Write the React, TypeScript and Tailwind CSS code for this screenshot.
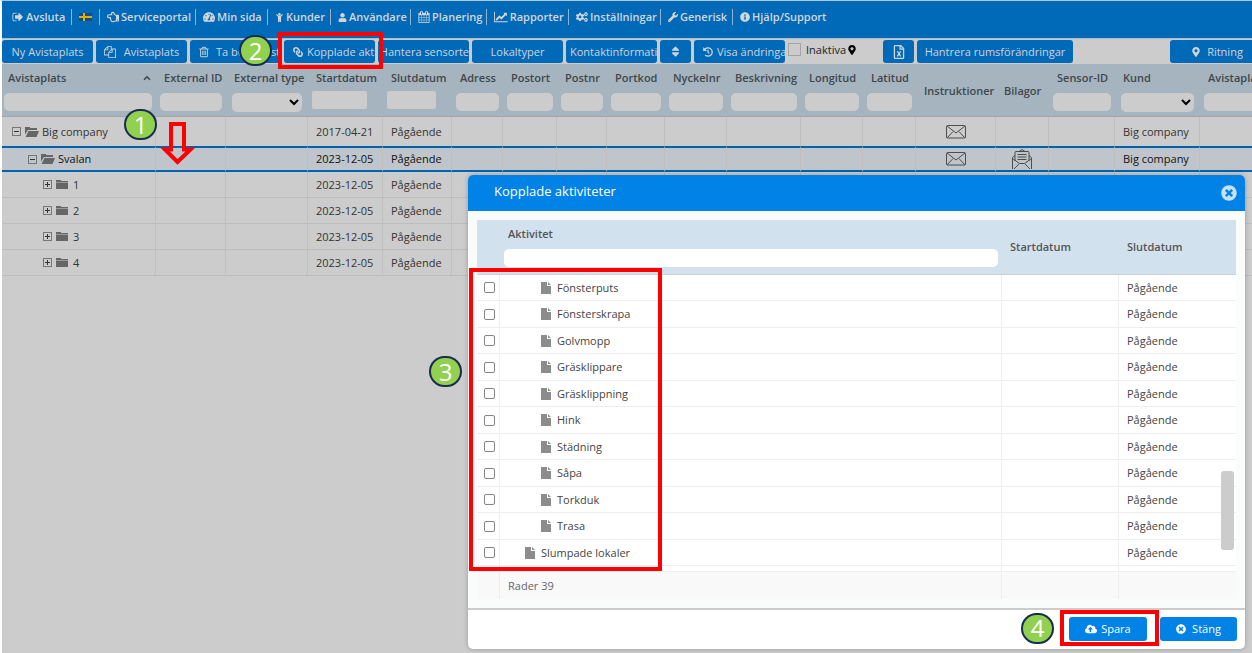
import type { ReactNode } from 'react';
import {
  FaChild,
  FaCloudUploadAlt,
  FaCogs,
  FaHistory,
  FaInfoCircle,
  FaLink,
  FaMapMarkerAlt,
  FaRegFileExcel,
  FaRegHandPointLeft,
  FaSort,
  FaTachometerAlt,
  FaTimesCircle,
  FaUser,
  FaWrench
} from 'react-icons/fa';
import { ChevronUp } from 'lucide-react';

const paths = {
  signOut:
    'M704 1440q0 4 1 20t.5 26.5-3 23.5-10 19.5-20.5 6.5h-320q-119 0-203.5-84.5t-84.5-203.5v-704q0-119 84.5-203.5t203.5-84.5h320q13 0 22.5 9.5t9.5 22.5q0 4 1 20t.5 26.5-3 23.5-10 19.5-20.5 6.5h-320q-66 0-113 47t-47 113v704q0 66 47 113t113 47h312l11.5 1 11.5 3 8 5.5 7 9 2 13.5zm928-544q0 26-19 45l-544 544q-19 19-45 19t-45-19-19-45v-288h-448q-26 0-45-19t-19-45v-384q0-26 19-45t45-19h448v-288q0-26 19-45t45-19 45 19l544 544q19 19 19 45z',
  files:
    'M1696 384q40 0 68 28t28 68v1216q0 40-28 68t-68 28h-960q-40 0-68-28t-28-68v-288h-544q-40 0-68-28t-28-68v-672q0-40 20-88t48-76l408-408q28-28 76-48t88-20h416q40 0 68 28t28 68v328q68-40 128-40h416zm-544 213l-299 299h299v-299zm-640-384l-299 299h299v-299zm196 647l316-316v-416h-384v416q0 40-28 68t-68 28h-416v640h512v-256q0-40 20-88t48-76zm956 804v-1152h-384v416q0 40-28 68t-68 28h-416v640h896z',
  trash:
    'M704 736v576q0 14-9 23t-23 9h-64q-14 0-23-9t-9-23v-576q0-14 9-23t23-9h64q14 0 23 9t9 23zm256 0v576q0 14-9 23t-23 9h-64q-14 0-23-9t-9-23v-576q0-14 9-23t23-9h64q14 0 23 9t9 23zm256 0v576q0 14-9 23t-23 9h-64q-14 0-23-9t-9-23v-576q0-14 9-23t23-9h64q14 0 23 9t9 23zm128 724v-948h-896v948q0 22 7 40.5t14.5 27 10.5 8.5h832q3 0 10.5-8.5t14.5-27 7-40.5zm-672-1076h448l-48-117q-7-9-17-11h-317q-10 2-17 11zm928 32v64q0 14-9 23t-23 9h-96v948q0 83-47 143.5t-113 60.5h-832q-66 0-113-58.5t-47-141.5v-952h-96q-14 0-23-9t-9-23v-64q0-14 9-23t23-9h309l70-167q15-37 54-63t79-26h320q40 0 79 26t54 63l70 167h309q14 0 23 9t9 23z',
  calendar:
    'M192 1664h288v-288h-288v288zm352 0h320v-288h-320v288zm-352-352h288v-320h-288v320zm352 0h320v-320h-320v320zm-352-384h288v-288h-288v288zm736 736h320v-288h-320v288zm-384-736h320v-288h-320v288zm768 736h288v-288h-288v288zm-384-352h320v-320h-320v320zm-352-864v-288q0-13-9.5-22.5t-22.5-9.5h-64q-13 0-22.5 9.5t-9.5 22.5v288q0 13 9.5 22.5t22.5 9.5h64q13 0 22.5-9.5t9.5-22.5zm736 864h288v-320h-288v320zm-384-384h320v-288h-320v288zm384 0h288v-288h-288v288zm32-480v-288q0-13-9.5-22.5t-22.5-9.5h-64q-13 0-22.5 9.5t-9.5 22.5v288q0 13 9.5 22.5t22.5 9.5h64q13 0 22.5-9.5t9.5-22.5zm384-64v1280q0 52-38 90t-90 38h-1408q-52 0-90-38t-38-90v-1280q0-52 38-90t90-38h128v-96q0-66 47-113t113-47h64q66 0 113 47t47 113v96h384v-96q0-66 47-113t113-47h64q66 0 113 47t47 113v96h128q52 0 90 38t38 90z',
  chart:
    'M2048 1536v128h-2048v-1536h128v1408h1920zm-128-1248v435q0 21-19.5 29.5t-35.5-7.5l-121-121-633 633q-10 10-23 10t-23-10l-233-233-416 416-192-192 585-585q10-10 23-10t23 10l233 233 464-464-121-121q-16-16-7.5-35.5t29.5-19.5h435q14 0 23 9t9 23z'
};

function Glyph({ name, wide }: { name: keyof typeof paths; wide?: boolean }) {
  return (
    <svg className="h-3 w-auto shrink-0" viewBox={wide ? '0 0 2048 1792' : '0 0 1792 1792'} fill="currentColor">
      <path d={paths[name]} />
    </svg>
  );
}

function Flag() {
  return (
    <svg className="h-2 w-[13px]" viewBox="0 0 13 8">
      <rect width="13" height="8" fill="#1c4a7c" />
      <path d="M4 0h2v8H4zM0 3h13v2H0z" fill="#d9b200" />
    </svg>
  );
}

function Folder({ open }: { open?: boolean }) {
  return open ? (
    <svg className="mr-[3px] ml-1 h-[10px] w-[14px]" viewBox="0 0 14 10" fill="#666666">
      <path d="M0 0h5v1h7v2H3L0 7.500zM3.500 4H14l-2.500 6H.5z" />
    </svg>
  ) : (
    <svg className="mr-[5px] ml-1 h-[9px] w-3" viewBox="0 0 12 9" fill="#666666">
      <path d="M0 0h5v1h7v1.500H0zM0 3h12v6H0z" />
    </svg>
  );
}

function Envelope() {
  return (
    <svg className="mx-auto h-[14px] w-5" viewBox="0 0 20 14" fill="none" stroke="#4d4d4d">
      <rect x="0.5" y="0.5" width="19" height="12.5" rx="1" />
      <path d="M1 1l9 7 9-7M1 13l6-6.500M19 13l-6-6.500" />
    </svg>
  );
}

function OpenEnvelope() {
  return (
    <svg className="mx-auto h-5 w-5" viewBox="0 0 20 20" fill="none" stroke="#4d4d4d">
      <path d="M3 6.500L.5 8.500V20M17 6.500l2.500 2V20M3 12V3.500q0-1 1-1h12q1 0 1 1V12M7 2.500l3-2 3 2M5.500 5.500h9M5.500 8h9M5.500 10.500h9M.5 9.500l7 5h5l7-5M2 20l5.500-5.500M18 20l-5.500-5.500" />
    </svg>
  );
}

function Step({ n, className }: { n: number; className: string }) {
  return (
    <span
      className={`absolute z-20 flex h-[31px] w-[33px] items-center justify-center rounded-full border-2 border-[#172c51] bg-[#92d050] text-[24px] leading-none font-medium text-white ${className}`}
    >
      {n}
    </span>
  );
}

const menu: { label?: string; icon: ReactNode; width: string }[] = [
  { label: 'Avsluta', icon: <Glyph name="signOut" />, width: 'w-[59px]' },
  { icon: <Flag />, width: 'w-[28px]' },
  { label: 'Serviceportal', icon: <FaRegHandPointLeft size={12} />, width: 'w-[96px]' },
  { label: 'Min sida', icon: <FaTachometerAlt size={12} />, width: 'w-[72px]' },
  { label: 'Kunder', icon: <FaChild size={9} />, width: 'w-[63px]' },
  { label: 'Användare', icon: <FaUser size={9} />, width: 'w-[80px]' },
  { label: 'Planering', icon: <Glyph name="calendar" />, width: 'w-[76px]' },
  { label: 'Rapporter', icon: <Glyph name="chart" wide />, width: 'w-[82px]' },
  { label: 'Inställningar', icon: <FaCogs size={12} />, width: 'w-[92px]' },
  { label: 'Generisk', icon: <FaWrench size={10} />, width: 'w-[72px]' },
  { label: 'Hjälp/Support', icon: <FaInfoCircle size={10} />, width: 'w-[100px]' }
];

const columns: { label: string; width: string; filter?: 'text' | 'select' | 'date' }[] = [
  { label: 'Avistaplats', width: 'w-[154px]', filter: 'text' },
  { label: 'External ID', width: 'w-[70px]', filter: 'text' },
  { label: 'External type', width: 'w-[82px]', filter: 'select' },
  { label: 'Startdatum', width: 'w-[75px]', filter: 'date' },
  { label: 'Slutdatum', width: 'w-[69px]', filter: 'date' },
  { label: 'Adress', width: 'w-[51px]', filter: 'text' },
  { label: 'Postort', width: 'w-[54px]', filter: 'text' },
  { label: 'Postnr', width: 'w-[50px]', filter: 'text' },
  { label: 'Portkod', width: 'w-[58px]', filter: 'text' },
  { label: 'Nyckelnr', width: 'w-[62px]', filter: 'text' },
  { label: 'Beskrivning', width: 'w-[74px]', filter: 'text' },
  { label: 'Longitud', width: 'w-[62px]', filter: 'text' },
  { label: 'Latitud', width: 'w-[53px]', filter: 'text' },
  { label: 'Instruktioner', width: 'w-[80px]' },
  { label: 'Bilagor', width: 'w-[53px]' },
  { label: 'Sensor-ID', width: 'w-[66px]', filter: 'text' },
  { label: 'Kund', width: 'w-[85px]', filter: 'select' },
  { label: 'Avistaplats typ', width: 'w-auto', filter: 'text' }
];

const places = [
  { name: 'Big company', level: 0, start: '2017-04-21', mail: true, customer: 'Big company' },
  { name: 'Svalan', level: 1, start: '2023-12-05', mail: true, attachment: true, customer: 'Big company', selected: true },
  { name: '1', level: 2, start: '2023-12-05' },
  { name: '2', level: 2, start: '2023-12-05' },
  { name: '3', level: 2, start: '2023-12-05' },
  { name: '4', level: 2, start: '2023-12-05' }
];

const indent = ['pl-[10px]', 'pl-[26px]', 'pl-[41px]'];

const activities = [
  'Fönsterputs',
  'Fönsterskrapa',
  'Golvmopp',
  'Gräsklippare',
  'Gräsklippning',
  'Hink',
  'Städning',
  'Såpa',
  'Torkduk',
  'Trasa',
  'Slumpade lokaler'
];

function ToolButton({
  children,
  className = 'w-[91px] justify-center gap-2',
  label
}: {
  children: ReactNode;
  className?: string;
  label?: string;
}) {
  return (
    <button
      aria-label={label}
      className={`flex h-[23px] shrink-0 items-center overflow-hidden rounded-[3px] bg-[#0069b8] whitespace-nowrap text-[#d0d4d8] ${className}`}
    >
      {children}
    </button>
  );
}

function PlacesTable() {
  return (
    <table className="w-full min-w-[1317px] table-fixed border-separate border-spacing-0 text-left">
      <thead className="bg-[#a5b4be] text-[#3f474d]">
        <tr className="h-[53px]">
          {columns.map((c, i) => (
            <th key={c.label} className={`border-b border-[#a5a5a5] p-0 align-top font-semibold whitespace-nowrap ${c.width}`}>
              <div className={`flex items-center justify-between pr-1 ${i === 0 ? 'pl-[6px]' : 'pl-2'} ${c.filter ? 'pt-[6px]' : 'pt-[19px]'}`}>
                {c.label}
                {i === 0 && <ChevronUp size={10} strokeWidth={4} />}
              </div>
              {c.filter === 'text' && (
                <div className={`pt-[7px] ${i === 0 ? 'pr-1 pl-[2px]' : 'px-1'}`}>
                  <input aria-label={c.label} className="block h-[18px] w-full rounded-[5px] bg-[#cccccc]" />
                </div>
              )}
              {c.filter === 'date' && (
                <div className="pt-[5px] pr-4 pl-1">
                  <input aria-label={c.label} className="block h-[18px] w-full rounded-[2px] bg-[#cccccc]" />
                </div>
              )}
              {c.filter === 'select' && (
                <div className="px-[6px] pt-[7px]">
                  <select aria-label={c.label} className="block h-[19px] w-full rounded-[5px] bg-[#cccccc] text-black">
                    <option></option>
                  </select>
                </div>
              )}
            </th>
          ))}
        </tr>
      </thead>
      <tbody className="text-[#333333]">
        {places.map((p) => {
          const line = p.selected
            ? 'h-[26px] border-y-2 border-y-[#0063ad] bg-[#bfc5ca] text-[#111111]'
            : p.level === 0
              ? 'h-[29px]'
              : 'h-[26px] border-b border-b-[#bdbdbd]';
          const cell = `border-r border-r-[#bfbfbf] py-0 pr-0 ${line}`;
          return (
            <tr key={p.name}>
              <td className={`${cell} ${indent[p.level]}`}>
                <div className="flex items-center">
                  <svg className="size-[9px]" viewBox="0 0 9 9" fill="none" stroke="#333333">
                    <rect x="0.5" y="0.5" width="8" height="8" stroke="#777777" />
                    <path d={p.level === 2 ? 'M2 4.500h5M4.500 2v5' : 'M2 4.500h5'} />
                  </svg>
                  <Folder open={p.level < 2} />
                  {p.name}
                </div>
              </td>
              <td className={cell} />
              <td className={cell} />
              <td className={`${cell} pl-2`}>{p.start}</td>
              <td className={`${cell} pl-2`}>Pågående</td>
              {columns.slice(5, 13).map((c) => (
                <td key={c.label} className={cell} />
              ))}
              <td className={cell}>{p.mail && <Envelope />}</td>
              <td className={cell}>{p.attachment && <OpenEnvelope />}</td>
              <td className={cell} />
              <td className={`${cell} pl-2`}>{p.customer}</td>
              <td className={cell} />
            </tr>
          );
        })}
      </tbody>
    </table>
  );
}

function ActivitiesDialog() {
  const edge = 'border-r border-b border-[#eeeeee]';
  return (
    <div
      role="dialog"
      aria-labelledby="dialog-title"
      className="absolute top-[174px] right-[7px] left-[466px] z-10 rounded-[5px] bg-white shadow-[0_0_5px_rgba(0,0,0,0.25)]"
    >
      <div className="flex h-9 items-center justify-between rounded-t-[5px] bg-[#0082e6] pr-2 pl-[26px] text-white">
        <h2 id="dialog-title" className="pb-1 text-[13px]">
          Kopplade aktiviteter
        </h2>
        <button aria-label="Stäng fönster" className="text-[#c5e2f9]">
          <FaTimesCircle size={16} />
        </button>
      </div>

      <div className="relative border-b-2 border-[#cccccc] bg-[#fafcfc] px-[9px] pt-[9px] pb-[9px]">
        <table className="w-full table-fixed border-separate border-spacing-0 text-left text-[#444444]">
          <thead className="bg-[#d2e1ee] text-[#555555]">
            <tr className="h-[55px]">
              <th className="w-[23px] border-b border-[#c8d2da] p-0" />
              <th className="border-b border-[#c8d2da] p-0 align-top font-semibold">
                <label htmlFor="aktivitet" className="block pt-[6px] pl-2">
                  Aktivitet
                </label>
                <div className="px-1 pt-[7px]">
                  <input id="aktivitet" className="block h-[18px] w-full rounded-[5px] bg-white" />
                </div>
              </th>
              <th className="w-[117px] border-b border-[#c8d2da] p-0 pl-2 font-semibold">Startdatum</th>
              <th className="w-[117px] border-b border-[#c8d2da] p-0 pl-2 font-semibold">Slutdatum</th>
            </tr>
          </thead>
          <tbody className="bg-white">
            {activities.map((a, i) => (
              <tr key={a} className="h-[26px] even:h-[27px]">
                <td className={`${edge} p-0`}>
                  <input
                    id={`akt-${i}`}
                    type="checkbox"
                    className="ml-[7px] block size-[11px] appearance-none rounded-[2px] border border-[#858585] bg-white checked:bg-[#0082e6]"
                  />
                </td>
                <td className={`${edge} py-0 pr-0 ${i === 10 ? 'pl-[25px]' : 'pl-[41px]'}`}>
                  <label htmlFor={`akt-${i}`} className="flex items-center gap-[6px]">
                    <svg className="h-3 w-[10px]" viewBox="0 0 10 12" fill="#8b8d8c">
                      <path d="M0 0h6v4h4v8H0zM7 0l3 3H7z" />
                    </svg>
                    {a}
                  </label>
                </td>
                <td className={`${edge} p-0`} />
                <td className="border-b border-[#eeeeee] p-0 pl-2">Pågående</td>
              </tr>
            ))}
            <tr className="h-[6px]">
              <td className={`${edge} p-0`} />
              <td className={`${edge} p-0`} />
              <td className={`${edge} p-0`} />
              <td className="border-b border-[#eeeeee] p-0" />
            </tr>
          </tbody>
          <tfoot className="bg-[#f9f9f9] text-[#666666]">
            <tr className="h-[27px]">
              <td className="border-r border-[#eeeeee] p-0" />
              <td className="border-r border-[#eeeeee] p-0 pl-2">Rader 39</td>
              <td className="border-r border-[#eeeeee] p-0" />
              <td className="p-0" />
            </tr>
          </tfoot>
        </table>
        <div className="absolute top-[260px] right-[11px] h-[79px] w-[13px] rounded-[3px] bg-[#cccccc]" />
        <div className="pointer-events-none absolute top-[57px] left-[1px] h-[303px] w-[193px] border-4 border-[#ff0000]" />
      </div>

      <div className="flex h-[39px] items-center justify-end gap-[13px] pr-2 pb-[2px]">
        <div className="relative">
          <button className="flex h-6 w-[78px] items-center justify-center gap-1 rounded-[3px] bg-[#0082e6] text-white">
            <FaCloudUploadAlt size={12} />
            Spara
          </button>
          <div className="pointer-events-none absolute -top-[7px] -right-3 -bottom-[5px] -left-[9px] border-4 border-[#ff0000]" />
          <Step n={4} className="-top-1 -left-12" />
        </div>
        <button className="flex h-6 w-[77px] items-center justify-center gap-[6px] rounded-[3px] bg-[#0082e6] text-white">
          <FaTimesCircle size={10} />
          Stäng
        </button>
      </div>
    </div>
  );
}

export default function App() {
  return (
    <div className="relative min-h-screen overflow-hidden border-t border-l-2 border-t-[#a9c8e0] border-l-white bg-[#cccccc] font-['Open_Sans','Noto_Sans',sans-serif] text-[11px] leading-4">
      <div className="absolute top-[9px] -left-px h-[43px] w-px bg-black" />
      <nav className="h-[37px] bg-[#0069b8] pt-[6px] pl-[10px]">
        <ul className="flex h-5 items-center">
          {menu.map((m, i) => (
            <li
              key={m.label ?? 'language'}
              className={`flex h-4 shrink-0 items-center whitespace-nowrap ${m.width} ${i > 0 ? 'border-l border-[#8db4d3] pl-[7px]' : ''}`}
            >
              <a href="#" aria-label={m.label ?? 'Svenska'} className="flex items-center gap-[2px] font-semibold text-[#d3d7da]">
                {m.icon}
                {m.label}
              </a>
            </li>
          ))}
        </ul>
      </nav>

      <div className="flex h-[26px] items-center gap-[3px] border-t border-[#a9bccb]">
        <ToolButton>Ny Avistaplats</ToolButton>
        <ToolButton>
          <Glyph name="files" />
          Avistaplats
        </ToolButton>
        <div className="relative">
          <ToolButton className="w-[91px] gap-[6px] pl-2">
            <Glyph name="trash" />
            Ta bort Avista
          </ToolButton>
          <Step n={2} className="-top-[5px] left-[49px]" />
        </div>
        <div className="relative">
          <ToolButton className="w-[91px] gap-1 pl-[9px]">
            <FaLink size={10} className="shrink-0 -scale-x-100" />
            Kopplade akti
          </ToolButton>
          <div className="pointer-events-none absolute -top-2 -right-2 -bottom-[6px] -left-[6px] z-10 border-4 border-[#ff0000]" />
        </div>
        <ToolButton className="w-[91px] justify-end">Hantera sensorte</ToolButton>
        <ToolButton>Lokaltyper</ToolButton>
        <ToolButton className="w-[91px] pl-1">Kontaktinformatio</ToolButton>
        <ToolButton className="w-[31px] justify-center" label="Sortera">
          <FaSort size={13} />
        </ToolButton>
        <ToolButton className="w-[91px] gap-1 pl-[9px]">
          <FaHistory size={10} className="shrink-0" />
          Visa ändringa
        </ToolButton>
        <label className="flex w-[92px] shrink-0 items-center gap-[5px] pb-1 text-[#222222]">
          <input type="checkbox" className="size-[13px] appearance-none border border-[#a5a5a5] bg-[#cccccc]" />
          Inaktiva
          <FaMapMarkerAlt size={10} className="-ml-1 text-black" />
        </label>
        <ToolButton className="w-[31px] justify-center" label="Exportera till Excel">
          <FaRegFileExcel size={14} />
        </ToolButton>
        <ToolButton className="w-[156px] justify-center">Hantrera rumsförändringar</ToolButton>
        <ToolButton className="ml-[94px] w-[94px] justify-center gap-[6px]">
          <FaMapMarkerAlt size={10} />
          Ritning
        </ToolButton>
      </div>

      <PlacesTable />

      <svg className="absolute top-[121px] left-[158px] h-11 w-9" viewBox="0 0 36 44" fill="none" stroke="#ff0000" strokeWidth="4">
        <path d="M11 2h13v25.500h6.500L17.500 40 5 27.500h6z" />
      </svg>
      <Step n={1} className="top-[108px] left-[122px]" />
      <Step n={3} className="top-[355px] left-[427px]" />

      <ActivitiesDialog />
    </div>
  );
}
